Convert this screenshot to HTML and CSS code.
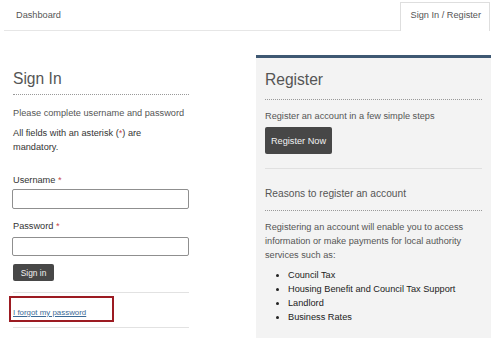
FILE: index.html
```html
<!DOCTYPE html>
<html>
  <head>
    <title>Sign In / Register</title>
    <link rel="stylesheet" href="styles.css">
  </head>
  <body>
    <!-- Tabs across the top -->
    <div class="tabs">
      <a href="#" class="tab">Dashboard</a>
      <a href="#" class="tab tab-active">Sign In / Register</a>
    </div>

    <div class="page">
      <!-- Sign in form -->
      <div class="signin">
        <h2 class="heading">Sign In</h2>
        <p class="intro">Please complete username and password</p>
        <p class="note">All fields with an asterisk (<span class="req">*</span>) are<br>mandatory.</p>

        <label class="field-label" for="username">Username <span class="req">*</span></label>
        <input type="text" class="field-input" id="username">

        <label class="field-label field-label-2" for="password">Password <span class="req">*</span></label>
        <input type="password" class="field-input field-input-2" id="password">

        <button class="btn btn-small">Sign in</button>

        <div class="rule rule-top"></div>
        <div class="forgot-box">
          <a href="#" class="forgot-link">I forgot my password</a>
        </div>
        <div class="rule rule-bottom"></div>
      </div>

      <!-- Register panel -->
      <div class="register">
        <h2 class="heading">Register</h2>
        <p class="reg-intro">Register an account in a few simple steps</p>
        <button class="btn btn-large">Register Now</button>
        <div class="rule rule-reg"></div>
        <h3 class="subheading">Reasons to register an account</h3>
        <p class="reasons">Registering an account will enable you to access information or make payments for local authority services such as:</p>
        <ul class="reason-list">
          <li>Council Tax</li>
          <li>Housing Benefit and Council Tax Support</li>
          <li>Landlord</li>
          <li>Business Rates</li>
        </ul>
      </div>
    </div>
  </body>
</html>
```

FILE: styles.css
```css
/* Base */
body {
  margin: 0;
  background-color: #fff;
  font-family: "Liberation Sans", Arial, sans-serif;
  font-size: 9.2px;
  color: #444;
}

p, h2, h3, ul {
  margin: 0;
}

/* Tabs */
.tabs {
  display: flex;
  justify-content: space-between;
  align-items: flex-end;
  margin: 0 9px 0 4px;
  padding-top: 2px;
  border-bottom: 1px solid #e6e6e6;
}

.tab {
  display: block;
  line-height: 24px;
  padding: 0 10px 4px 11px;
  margin-bottom: -1px;
  border: 1px solid transparent;
  border-bottom: none;
  color: #555;
  text-decoration: none;
}

.tab-active {
  padding: 0 8px 4px 10px;
  background-color: #fff;
  border-color: #dedede;
}

/* Columns */
.page {
  display: flex;
  padding-left: 13px;
}

.signin {
  width: 176px;
  padding-top: 38px;
}

.register {
  width: 217px;
  margin: 24px 0 0 67px;
  padding: 12px 9px 14px 9px;
  background-color: #f3f3f3;
  border-top: 3px solid #3e5872;
}

.heading {
  font-size: 15.6px;
  font-weight: normal;
  line-height: 20px;
  color: #555;
  border-bottom: 1px dotted #999;
}

.signin .heading {
  padding-bottom: 5px;
}

.register .heading {
  padding-bottom: 9px;
}

/* Sign in form */
.intro {
  margin-top: 11px;
  line-height: 14px;
  color: #555;
}

.note {
  margin-top: 6px;
  line-height: 14px;
  color: #333;
}

.req {
  color: #c8464a;
}

.field-label {
  display: block;
  margin-top: 19px;
  line-height: 14px;
  color: #333;
}

.field-label-2 {
  margin-top: 10px;
}

.field-input {
  display: block;
  box-sizing: border-box;
  width: 177px;
  height: 20px;
  margin: 2px 0 0 -1px;
  border: 1px solid #8f8f8f;
  border-radius: 2px;
  background-color: #fff;
}

.field-input-2 {
  height: 19px;
  margin-top: 4px;
}

.btn {
  display: block;
  border: none;
  border-radius: 2px;
  background-color: #474747;
  color: #f2f2f2;
  font-family: "Liberation Sans", Arial, sans-serif;
  padding: 0;
}

.btn-small {
  width: 41px;
  height: 17px;
  margin-top: 8px;
  font-size: 8.4px;
}

.btn-large {
  width: 67px;
  height: 27px;
  margin-top: 4px;
  font-size: 9.2px;
}

.rule {
  height: 1px;
  background-color: #e2e2e2;
}

.rule-top {
  margin-top: 11px;
}

.forgot-box {
  box-sizing: border-box;
  width: 105px;
  height: 26px;
  margin: 3px 0 0 -4px;
  padding: 9px 0 0 2px;
  border: 2px solid #9c1b22;
}

.forgot-link {
  font-size: 7.9px;
  color: #3b6a96;
  text-decoration: underline;
}

.rule-bottom {
  margin-top: 5px;
}

/* Register panel */
.reg-intro {
  margin-top: 9px;
  line-height: 14px;
  color: #555;
}

.rule-reg {
  margin-top: 14px;
  background-color: #e0e0e0;
}

.subheading {
  margin-top: 17px;
  padding-bottom: 8px;
  font-size: 10.2px;
  font-weight: normal;
  line-height: 16px;
  color: #555;
  border-bottom: 1px dotted #999;
}

.reasons {
  margin-top: 9px;
  line-height: 14px;
  color: #555;
}

.reason-list {
  margin-top: 6px;
  padding-left: 23px;
  line-height: 14px;
  color: #222;
}
```
